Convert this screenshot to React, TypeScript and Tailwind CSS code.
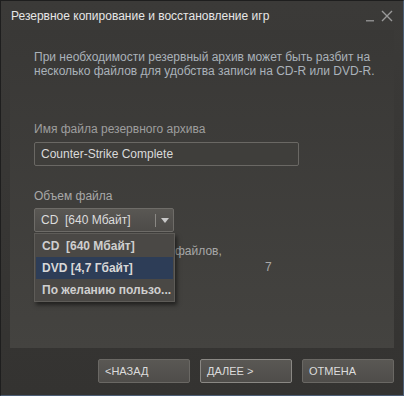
import React from "react";

const font = { fontFamily: '"Liberation Sans", Arial, sans-serif' };

function Btn({ label, active }: { label: string; active?: boolean }) {
  return (
    <div
      className={`w-[92px] h-[24px] flex items-center pl-[6px] text-[11px] text-[#dcdcdc] rounded-[2px] border bg-gradient-to-b from-[#5a5854] to-[#4f4d4a] ${
        active ? "border-[#8a8884]" : "border-[#6a6864]"
      }`}
    >
      {label}
    </div>
  );
}

export default function App() {
  return (
    <div className="w-[404px] h-[396px] overflow-hidden" style={font}>
      <div className="w-[404px] h-[396px] flex flex-col border border-[#1e1e1e] border-r-[#4b5d75] border-b-[#4b5d75] bg-gradient-to-b from-[#3b3a38] to-[#343331]">
        {/* title bar */}
        <div className="h-[29px] flex items-center justify-between pl-[10px] pr-[10px]">
          <span className="text-[12px] text-[#e6e6e6]">Резервное копирование и восстановление игр</span>
          <div className="flex items-center gap-[6px]">
            <svg width="10" height="12" viewBox="0 0 10 12">
              <rect x="1" y="10" width="8" height="1.5" fill="#8a8a8a" />
            </svg>
            <svg width="12" height="12" viewBox="0 0 12 12">
              <path d="M1 1 L11 11 M11 1 L1 11" stroke="#9a9a9a" strokeWidth="1.4" />
            </svg>
          </div>
        </div>
        {/* panel */}
        <div className="mx-[9px] h-[318px] bg-gradient-to-b from-[#393836] to-[#444340] pl-[24px] pt-[20px] relative">
          <div className="text-[12px] leading-[14px] text-[#aab2ba]">
            При необходимости резервный архив может быть разбит на
            <br />
            несколько файлов для удобства записи на CD-R или DVD-R.
          </div>
          <div className="mt-[44px] text-[12px] leading-[14px] text-[#9e9e9e]">Имя файла резервного архива</div>
          <div className="mt-[6px] w-[265px] h-[24px] border border-[#6a6864] rounded-[2px] bg-[#3f3e3b] flex items-center pl-[6px] text-[12px] text-[#dadada]">
            Counter-Strike Complete
          </div>
          <div className="mt-[23px] text-[12px] leading-[14px] text-[#a8a8a8]">Объем файла</div>
          <div className="mt-[5px] w-[140px] h-[24px] border border-[#6e6c68] rounded-[2px] bg-gradient-to-b from-[#595753] to-[#4d4b48] flex items-center text-[12px] text-[#dcdcdc]">
            <span className="pl-[6px] flex-1 whitespace-pre">CD  [640 Мбайт]</span>
            <div className="w-px h-[13px] bg-[#8a8884]" />
            <div className="w-[17px] flex justify-center">
              <svg width="8" height="5" viewBox="0 0 8 5">
                <path d="M0 0 L8 0 L4 5 Z" fill="#c8c8c8" />
              </svg>
            </div>
          </div>
          <div className="mt-[11px] text-[12px] leading-[16px] text-[#a8a8a8]">
            <div className="pl-[141px]">файлов,</div>
            <div className="pl-[231px]">7</div>
          </div>
          {/* dropdown menu */}
          <div className="absolute left-[24px] top-[203px] w-[141px] h-[69px] bg-[#4a4845] border border-[#5e5c58] shadow-[2px_3px_4px_rgba(0,0,0,0.5)] px-[1px] pt-[1px] flex flex-col text-[12px] font-bold text-[#cfcfcf]">
            <div className="h-[22px] flex items-center pl-[6px] whitespace-pre">CD  [640 Мбайт]</div>
            <div className="h-[23px] flex items-center pl-[6px] bg-[#2d3d57] text-[#d8d8d8]">DVD [4,7 Гбайт]</div>
            <div className="h-[22px] flex items-center pl-[6px]">По желанию пользо...</div>
          </div>
        </div>
        {/* buttons */}
        <div className="flex justify-end gap-[10px] pr-[9px] pt-[11px]">
          <Btn label="<НАЗАД" />
          <Btn label="ДАЛЕЕ >" active />
          <Btn label="ОТМЕНА" />
        </div>
      </div>
    </div>
  );
}
